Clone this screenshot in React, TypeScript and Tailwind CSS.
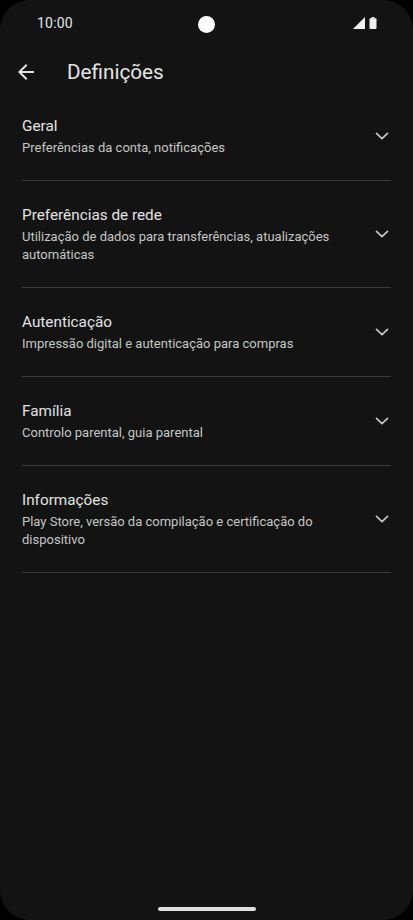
import React from "react";

const items = [
  { title: "Geral", sub: ["Preferências da conta, notificações"] },
  { title: "Preferências de rede", sub: ["Utilização de dados para transferências, atualizações", "automáticas"] },
  { title: "Autenticação", sub: ["Impressão digital e autenticação para compras"] },
  { title: "Família", sub: ["Controlo parental, guia parental"] },
  { title: "Informações", sub: ["Play Store, versão da compilação e certificação do", "dispositivo"] },
];

function Chevron() {
  return (
    <svg width="24" height="24" viewBox="0 0 24 24" fill="none" stroke="#c4c7c5" strokeWidth="1.7" strokeLinecap="round" strokeLinejoin="round">
      <path d="M6.5 9.3 L12 14.6 L17.5 9.3" />
    </svg>
  );
}

export default function App() {
  return (
    <div className="w-[413px] h-[920px] bg-black" style={{ fontFamily: "Roboto, 'Noto Sans', sans-serif" }}>
      <div className="relative w-full h-full rounded-[30px] bg-[#131313] overflow-hidden flex flex-col">
        {/* status bar */}
        <div className="h-[48px] flex items-start pt-[13px] px-[37px] justify-between relative">
          <span className="text-[14px] leading-[20px] text-[#e6e6e6] tracking-[0.2px]">10:00</span>
          <div className="absolute left-[198px] top-[16px] w-[17px] h-[17px] rounded-full bg-white" />
          <div className="flex items-center gap-[4px] mt-[4px] mr-[-1px]">
            <svg width="12" height="12" viewBox="0 0 12 12">
              <path d="M12 0 L12 12 L0 12 Z" fill="#f0f0f0" />
            </svg>
            <svg width="8" height="12" viewBox="0 0 8 12">
              <rect x="2.5" y="0" width="3" height="1.5" fill="#f0f0f0" />
              <rect x="0.5" y="1.2" width="7" height="10.8" rx="1" fill="#f0f0f0" />
            </svg>
          </div>
        </div>
        {/* header */}
        <div className="h-[48px] flex items-center">
          <div className="w-[24px] h-[24px] ml-[14px]">
            <svg width="24" height="24" viewBox="0 0 24 24" fill="#e3e3e3">
              <path d="M20 11H7.83l5.59-5.59L12 4l-8 8 8 8 1.41-1.41L7.83 13H20v-2z" />
            </svg>
          </div>
          <span className="ml-[29px] text-[20.7px] leading-[28px] text-[#e3e3e3]">Definições</span>
        </div>
        {/* list */}
        <div className="px-[22px] mt-[2px]">
          {items.map((it, i) => (
            <div
              key={it.title}
              className={`flex items-center border-b border-[#3c3c3c] ${i === 0 ? "pt-[17px]" : "pt-[23px]"} pb-[23px]`}
            >
              <div className="flex-1 min-w-0">
                <div className="text-[15.3px] leading-[22px] text-[#e3e3e3]">{it.title}</div>
                <div className="mt-[2px] text-[13px] leading-[18px] text-[#c4c7c5]">
                  {it.sub.map((s) => (
                    <div key={s}>{s}</div>
                  ))}
                </div>
              </div>
              <div className="mr-[-3px]">
                <Chevron />
              </div>
            </div>
          ))}
        </div>
        <div className="flex-1" />
        <div className="flex justify-center pb-[9px]">
          <div className="w-[98px] h-[4px] rounded-full bg-[#e0e0e0]" />
        </div>
      </div>
    </div>
  );
}
